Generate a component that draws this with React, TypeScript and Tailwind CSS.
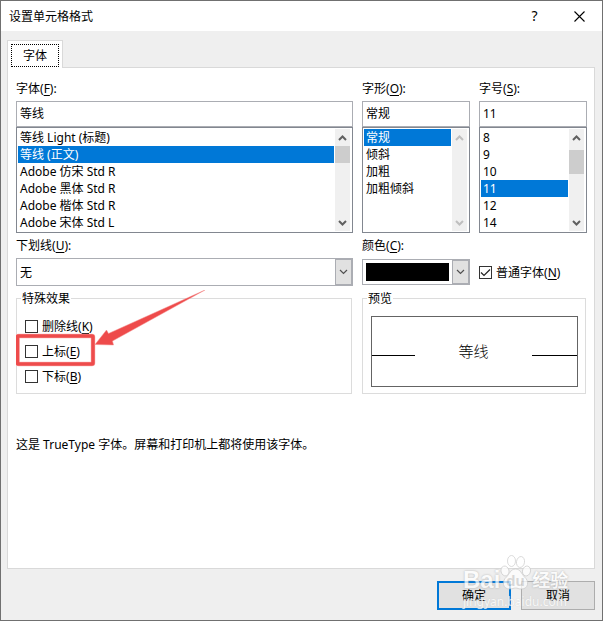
import { useState } from "react"
import type { ReactNode } from "react"

const fonts = ["等线 Light (标题)", "等线 (正文)", "Adobe 仿宋 Std R", "Adobe 黑体 Std R", "Adobe 楷体 Std R", "Adobe 宋体 Std L"]
const styles = ["常规", "倾斜", "加粗", "加粗倾斜"]
const sizes = ["8", "9", "10", "11", "12", "14"]

// Label text followed by its underlined access key
function KeyLabel({ text, accessKey, colon }: { text: string; accessKey: string; colon?: boolean }) {
  return (
    <span>
      {text}(<u className="underline-offset-2">{accessKey}</u>){colon && ":"}
    </span>
  )
}

function Chevron({ up, thin }: { up?: boolean; thin?: boolean }) {
  return (
    <svg width="9" height="6" viewBox="0 0 9 6" fill="none" stroke="currentColor" strokeWidth={thin ? 1.2 : 2} aria-hidden="true">
      <path d={up ? "M1 5 4.5 1.5 8 5" : "M1 1 4.5 4.5 8 1"} />
    </svg>
  )
}

type ListFieldProps = {
  id: string
  label: string
  accessKey: string
  items: string[]
  value: string
  selected: string
  onSelect: (item: string) => void
  thumb?: string
}

function ListField({ id, label, accessKey, items, value, selected, onSelect, thumb }: ListFieldProps) {
  return (
    <div className="min-w-0">
      <label htmlFor={id} className="block h-[21px]">
        <KeyLabel text={label} accessKey={accessKey} colon />
      </label>
      <input
        id={id}
        value={value}
        onChange={(e) => onSelect(e.target.value)}
        className="block h-[26px] w-full border border-[#abadb3] bg-white px-[3px] pb-0.5 outline-none"
      />
      <div className="flex h-[106px] border border-[#828790] p-px">
        <ul role="listbox" aria-label={label} className="min-w-0 flex-1">
          {items.map((item) => (
            <li
              key={item}
              role="option"
              aria-selected={item === selected}
              onClick={() => onSelect(item)}
              className={`h-[17px] overflow-hidden whitespace-nowrap pl-0.5 ${item === selected ? "bg-[#0078d7] text-white" : ""}`}
            >
              {item}
            </li>
          ))}
        </ul>
        <div
          className={`ml-px mr-px flex w-[15px] flex-col bg-[#f0f0f0] ${thumb ? "text-[#606060]" : "text-[#bfbfbf]"}`}
        >
          <button type="button" aria-label="向上滚动" disabled={!thumb} className="flex h-[17px] items-center justify-center">
            <Chevron up />
          </button>
          <div className="flex-1">{thumb && <div className={`bg-[#cdcdcd] ${thumb}`} />}</div>
          <button type="button" aria-label="向下滚动" disabled={!thumb} className="flex h-[17px] items-center justify-center">
            <Chevron />
          </button>
        </div>
      </div>
    </div>
  )
}

function Check({ children, defaultChecked }: { children: ReactNode; defaultChecked?: boolean }) {
  return (
    <label className="flex items-center gap-1">
      <span className="grid">
        <input
          type="checkbox"
          defaultChecked={defaultChecked}
          className="peer col-start-1 row-start-1 size-[13px] appearance-none border border-[#333333] bg-white"
        />
        <svg
          viewBox="0 0 13 13"
          fill="none"
          stroke="#222222"
          strokeWidth="1.2"
          className="pointer-events-none invisible col-start-1 row-start-1 size-[13px] peer-checked:visible"
          aria-hidden="true"
        >
          <path d="m2 6.5 3 3 6-6" />
        </svg>
      </span>
      {children}
    </label>
  )
}

function DropArrow() {
  return (
    <span className="pointer-events-none flex w-[17px] shrink-0 items-center justify-center border border-[#abadb3] bg-[#e1e1e1] text-[#505050]">
      <Chevron thin />
    </span>
  )
}

function Watermark() {
  return (
    <div
      className="pointer-events-none absolute right-[27px] bottom-1 h-[62px] w-[114px] text-white opacity-75 select-none"
      aria-hidden="true"
    >
      <div className="flex h-[38px] items-end pl-0.5">
        <span className="font-['Liberation_Sans'] text-2xl leading-6 font-bold [text-shadow:0_0_2px_#999999]">Bai</span>
        <svg width="32" height="38" viewBox="0 0 32 38" className="shrink-0" fill="currentColor" stroke="#c4c4c4" strokeWidth="0.8">
          <ellipse cx="5" cy="17" rx="4" ry="5" transform="rotate(-15 5 17)" />
          <ellipse cx="11.500" cy="7" rx="4" ry="5.500" />
          <ellipse cx="20.500" cy="8" rx="4" ry="5.500" transform="rotate(10 20.500 8)" />
          <ellipse cx="26.500" cy="17" rx="4" ry="5" transform="rotate(15 26.500 17)" />
          <path d="M15.500 15c5 0 6 5 9 8 5 4 4 12-3 12-3 0-4-1-6-1s-3 1-6 1c-7 0-8-8-3-12 3-3 4-8 9-8z" />
          <text x="15.500" y="32" textAnchor="middle" fontFamily="Liberation Sans" fontSize="15" fontWeight="bold" fill="#d0d0d0" stroke="none">
            du
          </text>
        </svg>
        <span className="text-lg leading-6 font-bold whitespace-nowrap [text-shadow:0_0_2px_#999999]">经验</span>
      </div>
      <div className="pl-0.5 text-xs leading-5 [text-shadow:0_0_1px_#c0c0c0]">jingyan.baidu.com</div>
    </div>
  )
}

export default function App() {
  const [font, setFont] = useState("等线 (正文)")
  const [style, setStyle] = useState("常规")
  const [size, setSize] = useState("11")

  const fontName = font.replace(" (正文)", "")

  return (
    <div className="flex min-h-screen flex-col border border-[#707070] bg-[#efefef] font-['Noto_Sans','Noto_Sans_CJK_SC',sans-serif] text-xs leading-[17px] text-black">
      <header className="flex h-[30px] items-center bg-white pl-2">
        <h1 className="flex-1">设置单元格格式</h1>
        <button type="button" aria-label="帮助" className="w-[45px] text-sm">
          ?
        </button>
        <button type="button" aria-label="关闭" className="flex w-[45px] justify-center">
          <svg width="11" height="11" viewBox="0 0 11 11" stroke="currentColor" strokeWidth="1.1" aria-hidden="true">
            <path d="m.5.5 10 10M10.500.5l-10 10" />
          </svg>
        </button>
      </header>

      <main className="flex flex-1 flex-col pt-[9px] pr-[7px] pl-1.5">
        <div role="tablist" className="relative -mb-px flex">
          <button
            type="button"
            role="tab"
            aria-selected="true"
            className="h-7 border border-b-0 border-[#d9d9d9] bg-white px-[3px] pt-[3px] pb-0.5"
          >
            <span className="block border border-dotted border-black px-[11px] py-0.5">字体</span>
          </button>
        </div>

        <section role="tabpanel" className="flex-1 border border-[#d9d9d9] bg-white pt-3 pr-[7px] pl-2">
          <div className="grid grid-cols-[1fr_108px_108px] gap-x-[9px]">
            <ListField
              id="font"
              label="字体"
              accessKey="F"
              items={fonts}
              value={fontName}
              selected={font}
              onSelect={setFont}
              thumb="h-[17px]"
            />
            <ListField id="style" label="字形" accessKey="O" items={styles} value={style} selected={style} onSelect={setStyle} />
            <ListField
              id="size"
              label="字号"
              accessKey="S"
              items={sizes}
              value={size}
              selected={size}
              onSelect={setSize}
              thumb="mt-1 h-6"
            />
          </div>

          <div className="mt-1 grid grid-cols-[1fr_108px_108px] gap-x-[9px]">
            <div>
              <label htmlFor="underline" className="block h-[21px]">
                <KeyLabel text="下划线" accessKey="U" colon />
              </label>
              <div className="flex h-7 border border-[#abadb3]">
                <select id="underline" className="min-w-0 flex-1 appearance-none bg-white pl-[3px] outline-none">
                  <option>无</option>
                  <option>单下划线</option>
                  <option>双下划线</option>
                </select>
                <DropArrow />
              </div>
            </div>
            <div>
              <label htmlFor="color" className="block h-[22px]">
                <KeyLabel text="颜色" accessKey="C" colon />
              </label>
              <div className="flex h-[26px] border border-[#abadb3]">
                <select id="color" className="m-[3px] min-w-0 flex-1 appearance-none bg-black text-black outline-none">
                  <option aria-label="黑色" />
                </select>
                <DropArrow />
              </div>
            </div>
            <div className="flex h-[28px] items-center self-end">
              <Check defaultChecked>
                <KeyLabel text="普通字体" accessKey="N" />
              </Check>
            </div>
          </div>

          <div className="mt-1 grid grid-cols-[1fr_224px] gap-x-2.5 pr-px">
            <fieldset className="h-[104px] border border-[#dcdcdc] pl-2">
              <legend className="-ml-1 px-px">特殊效果</legend>
              <div className="relative mt-[11px] flex flex-col gap-2">
                <Check>
                  <KeyLabel text="删除线" accessKey="K" />
                </Check>
                <Check>
                  <KeyLabel text="上标" accessKey="E" />
                </Check>
                <Check>
                  <KeyLabel text="下标" accessKey="B" />
                </Check>
                {/* Callout frame and arrow pointing at the superscript option */}
                <svg
                  className="pointer-events-none absolute -top-[28px] -left-[9px]"
                  width="192"
                  height="80"
                  viewBox="0 0 192 80"
                  fill="none"
                  aria-hidden="true"
                >
                  <rect x="1.500" y="46" width="75.500" height="28" rx="1" stroke="#f9b5b5" strokeWidth="4.500" />
                  <rect x="1.500" y="46" width="75.500" height="28" rx="1" stroke="#ee4b4b" strokeWidth="3.500" />
                  <path d="M79 54.500 90.500 40l2 3.500L189 0 96.500 51l1 4z" fill="#ee4b4b" stroke="#f58f8f" strokeWidth="0.5" />
                </svg>
              </div>
            </fieldset>
            <fieldset className="h-[104px] border border-[#dcdcdc] pr-[7px] pl-2">
              <legend className="-ml-1 px-px">预览</legend>
              <div className="mt-[9px] flex h-[71px] items-center justify-between border border-[#646464]">
                <span className="mt-2 h-px w-[43px] bg-black" />
                <span className="text-[15px] font-light">等线</span>
                <span className="mt-2 h-px w-[45px] bg-black" />
              </div>
            </fieldset>
          </div>

          <p className="mt-[42px]">这是 TrueType 字体。屏幕和打印机上都将使用该字体。</p>
        </section>
      </main>

      <footer className="relative flex justify-end gap-2.5 pt-3 pr-[7px] pb-2.5">
        <button type="button" className="h-[29px] w-[74px] border-2 border-[#0078d7] bg-[#e1e1e1]">
          确定
        </button>
        <button type="button" className="h-[29px] w-[74px] border border-[#adadad] bg-[#e1e1e1]">
          取消
        </button>
        <Watermark />
      </footer>
    </div>
  )
}
